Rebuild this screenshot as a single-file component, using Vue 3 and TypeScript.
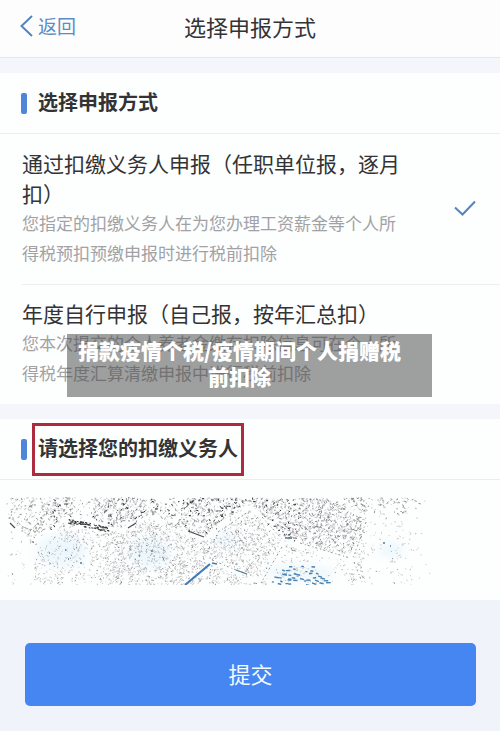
<script setup lang="ts">
import { ref } from 'vue'

interface Option {
  id: string
  title: string
  detail: string
}

type Point = [number, number]

const options: Option[] = [
  {
    id: 'agent',
    title: '通过扣缴义务人申报（任职单位报，逐月扣）',
    detail: '您指定的扣缴义务人在为您办理工资薪金等个人所得税预扣预缴申报时进行税前扣除',
  },
  {
    id: 'annual',
    title: '年度自行申报（自己报，按年汇总扣）',
    detail: '您本次提交的个人养老金缴存扣除信息可在个人所得税年度汇算清缴申报中进行税前扣除',
  },
]

const selected = ref('agent')

// Seeded generator, so the speckled mask is the same on every render.
let seed = 20231
function random(): number {
  seed = (seed * 1664525 + 1013904223) % 4294967296
  return seed / 4294967296
}

// Bare channels that run between the speckled cells.
const channels: Point[][] = [
  [[8, 24], [33, 52], [62, 24], [80, 18], [112, 33], [130, 28], [150, 18], [178, 33], [205, 41], [250, 9], [285, 43], [352, 62], [368, 22], [425, 18]],
  [[285, 43], [260, 88]],
  [[352, 62], [362, 88]],
  [[200, 60], [260, 84]],
  [[368, 22], [335, 0]],
]

function segmentDistance(x: number, y: number, a: Point, b: Point): number {
  const dx = b[0] - a[0]
  const dy = b[1] - a[1]
  const t = Math.max(0, Math.min(1, ((x - a[0]) * dx + (y - a[1]) * dy) / (dx * dx + dy * dy)))
  return Math.hypot(x - a[0] - t * dx, y - a[1] - t * dy)
}

function channelDistance(x: number, y: number): number {
  let best = 999
  for (const line of channels) {
    for (let i = 1; i < line.length; i++) {
      best = Math.min(best, segmentDistance(x, y, line[i - 1], line[i]))
    }
  }
  return best
}

function ridge(x: number): number {
  const line = channels[0]
  for (let i = 1; i < line.length; i++) {
    const a = line[i - 1]
    const b = line[i]
    if (x >= a[0] && x < b[0]) return a[1] + ((b[1] - a[1]) * (x - a[0])) / (b[0] - a[0])
  }
  return 20
}

function density(x: number, y: number): number {
  const upper = y < ridge(x)
  if (x < 34 && y > 20 && y > (x - 8) * 1.1 + 22) return 0.06
  if (x > 365) return y < 20 ? 0.25 : x > 395 ? 0.16 : 0.07
  if (x > 268 && x < 350 && y > 56) return 0.12
  if (x > 75 && x < 93 && y < 20) return 0.15
  if (x > 158 && x < 185 && y < 22) return 0.3
  if (upper) return x < 50 ? 0.4 : 0.75
  if (x > 108 && x < 124 && y > 36 && y < 74) return 0.9
  if (x < 105) return 0.35
  return 0.65
}

const speckles = { dark: '', mid: '', soft: '', pale: '' }
for (let i = 0; i < 10500; i++) {
  const x = 8 + random() * 424
  const y = 0.5 + random() * 87
  const edge = x > 400 ? (432 - x) / 32 : 1
  const gap = channelDistance(x, y) < 3 ? 0.12 : 1
  if (random() > density(x, y) * edge * gap) continue
  const upper = y < ridge(x)
  const length = upper ? 0.9 + random() * 1.8 : 0.7 + random() * 1.2
  const angle = random() * Math.PI
  const mark = `M${x.toFixed(1)} ${y.toFixed(1)}l${(Math.cos(angle) * length).toFixed(1)} ${(Math.sin(angle) * length).toFixed(1)}`
  const tone = random()
  if (upper && x > 50 && x < 300 && tone < 0.15) speckles.dark += mark
  else if (tone < (upper ? 0.4 : 0.17)) speckles.mid += mark
  else if (tone < 0.7) speckles.soft += mark
  else speckles.pale += mark
}

// Dark cluster that follows the ridge between the first two cells.
for (let i = 0; i < 70; i++) {
  const x = 68 + random() * 40
  const y = 22 + (x - 68) * 0.2 + random() * 5
  speckles.dark += `M${x.toFixed(1)} ${y.toFixed(1)}l${(0.8 + random() * 1.8).toFixed(1)} 0.4`
}

let blueMarks = ''
for (let row = 0; row < 7; row++) {
  for (let col = 0; col < 8; col++) {
    const x = 264 + row * 2 + col * 7 + random() * 6 - 3
    const y = 69 + row * 2.7 + random() * 2.4
    if (Math.abs(x - 298) > 14 + row * 3 || random() < 0.15) continue
    blueMarks += `M${x.toFixed(1)} ${y.toFixed(1)}l${(2 + random() * 3).toFixed(1)} ${(random() * 2 - 0.5).toFixed(1)}`
  }
}
</script>

<template>
  <div class="page">
    <header class="topbar">
      <a class="back" href="#">
        <svg class="back-icon" viewBox="0 0 13 22" aria-hidden="true">
          <path d="M12 1 1.5 11 12 21" />
        </svg>
        返回
      </a>
      <h1 class="page-title">选择申报方式</h1>
    </header>

    <main>
      <section class="panel" aria-labelledby="method-heading">
        <div class="section-head">
          <span class="bar"></span>
          <h2 id="method-heading" class="heading">选择申报方式</h2>
        </div>
        <div v-for="option in options" :key="option.id" class="option">
          <label class="option-row" :for="option.id">
            <span class="option-text">
              <span class="option-title">{{ option.title }}</span>
              <span class="option-detail">{{ option.detail }}</span>
            </span>
            <input :id="option.id" v-model="selected" class="radio" type="radio" name="method" :value="option.id" />
            <svg v-if="selected === option.id" class="check" viewBox="0 0 22 16" aria-hidden="true">
              <path d="M1 7.5 8.5 14.5 21 1.5" />
            </svg>
          </label>
          <p v-if="option.id === 'annual'" class="caption">捐款疫情个税/疫情期间个人捐赠税前扣除</p>
        </div>
      </section>

      <section class="panel payer" aria-labelledby="payer-heading">
        <div class="section-head">
          <span class="bar"></span>
          <h2 id="payer-heading" class="heading marked">请选择您的扣缴义务人</h2>
        </div>
        <svg class="mask" viewBox="0 0 500 88" aria-hidden="true">
          <g class="tint">
            <ellipse cx="62" cy="54" rx="25" ry="16" />
            <ellipse cx="150" cy="56" rx="22" ry="15" />
            <ellipse cx="226" cy="42" rx="12" ry="7" />
            <ellipse cx="300" cy="76" rx="34" ry="8" />
            <ellipse cx="391" cy="53" rx="12" ry="7" />
          </g>
          <path class="pale" :d="speckles.pale" />
          <path class="soft" :d="speckles.soft" />
          <path class="mid" :d="speckles.mid" />
          <path class="dark" :d="speckles.dark" />
          <path class="edge" d="M94 31l7-2 7 4M168 27l11 5M262 20l20 22M300 46l50 15M366 25l-12 34M282 50l-21 36M354 65l8 20M212 63l36 15M218 35l33-22" />
          <path class="ridge-mark" d="M10 26l5 5M128 31l8-5M188 34l16 6" />
          <path class="blue-dots" d="M49 56h1M65 53h1.5M68 62h1M80 66h2M151 54h2M139 59h1M163 62h1M383 46h2M390 49h1M236 73l11 4M285 41h7M212 66l5 1" />
          <path class="blue-marks" :d="blueMarks" />
          <path class="slash" d="M185 88 210 67" />
        </svg>
      </section>
    </main>

    <footer class="actions">
      <button class="submit" type="button">提交</button>
    </footer>
  </div>
</template>

<style>
body {
  margin: 0;
  background: #f0f3fa;
}
</style>

<style scoped>
.page {
  font-family: "Noto Sans CJK SC", "Noto Sans", sans-serif;
  color: #333335;
}

.topbar {
  display: grid;
  grid-template-columns: 1fr auto 1fr;
  align-items: center;
  height: 58px;
  padding: 0 20px 6px;
  box-sizing: border-box;
  background: #fdfdfe;
  border-bottom: 1px solid #e3e8ea;
}

.back {
  display: flex;
  align-items: center;
  gap: 5px;
  color: #5b8dc3;
  font-size: 19px;
  line-height: 30px;
  text-decoration: none;
}

.back-icon {
  width: 13px;
  height: 22px;
}

.back-icon path,
.check path {
  fill: none;
  stroke: #5285bf;
  stroke-width: 2;
}

.page-title {
  margin: 0;
  font-size: 22px;
  font-weight: 400;
  line-height: 30px;
}

main {
  display: grid;
  gap: 15px;
  padding-top: 15px;
  background: #f5f6fc;
}

.panel {
  background: #fdfefe;
}

.section-head {
  display: flex;
  align-items: center;
  gap: 5px;
  height: 61px;
  padding: 1px 21px 0;
  box-sizing: border-box;
  border-bottom: 1px solid #ebeeee;
}

.bar {
  width: 6px;
  height: 21px;
  border-radius: 2px;
  background: #4f86da;
}

.heading {
  margin: 0;
  padding: 0 3px 3px;
  border: 3px solid transparent;
  font-size: 20px;
  font-weight: 700;
  line-height: 44px;
}

.marked {
  border-color: #ae2b3f;
}

.option {
  position: relative;
}

.option + .option::before {
  content: "";
  display: block;
  height: 1px;
  margin: 0 0 -1px 22px;
  background: #eceeef;
}

.option-row {
  display: grid;
  grid-template-columns: 1fr 22px;
  align-items: center;
  gap: 49px;
  padding: 14px 24px 16px 22px;
}

.option-title,
.option-detail {
  display: block;
  line-height: 30px;
}

.option-title {
  font-size: 21px;
}

.option-detail {
  color: #a2a2a4;
  font-size: 17px;
}

.radio {
  position: absolute;
  opacity: 0;
  pointer-events: none;
}

.check {
  width: 22px;
  height: 16px;
}

.caption {
  position: absolute;
  top: 50px;
  right: 68px;
  left: 67px;
  margin: 0;
  padding: 3px 25px 8px 5px;
  background: rgba(70, 70, 70, 0.52);
  color: #fff;
  font-size: 21px;
  font-weight: 900;
  line-height: 26px;
  text-align: center;
}

.payer {
  padding-bottom: 15px;
}

.mask {
  display: block;
  width: 100%;
  margin-top: 17px;
}

.mask path {
  fill: none;
}

.tint {
  fill: #e6f5fc;
  opacity: 0.7;
  filter: blur(4px);
}

.pale {
  stroke: #d2d2d5;
}

.soft {
  stroke: #adacb0;
  stroke-width: 0.8;
}

.mid {
  stroke: #77757a;
  stroke-width: 0.8;
}

.dark {
  stroke: #333135;
}

.edge {
  stroke: #85858a;
  stroke-width: 0.9;
  stroke-dasharray: 2 3 1 2;
}

.ridge-mark {
  stroke: #4a4a4e;
  stroke-width: 1.2;
}

.blue-dots {
  stroke: #4c7b98;
  stroke-width: 1.3;
}

.blue-marks {
  stroke: #4c84b4;
  stroke-width: 1.4;
}

.slash {
  stroke: #3f7cbb;
  stroke-width: 2.2;
}

.actions {
  padding: 43px 24px 25px 25px;
  background: #f0f3fa;
}

.submit {
  display: block;
  width: 100%;
  height: 63px;
  padding: 0 0 4px;
  border: 0;
  border-radius: 5px;
  background: #4586f3;
  color: #f4fbff;
  font-family: inherit;
  font-size: 22px;
  line-height: 30px;
}
</style>
